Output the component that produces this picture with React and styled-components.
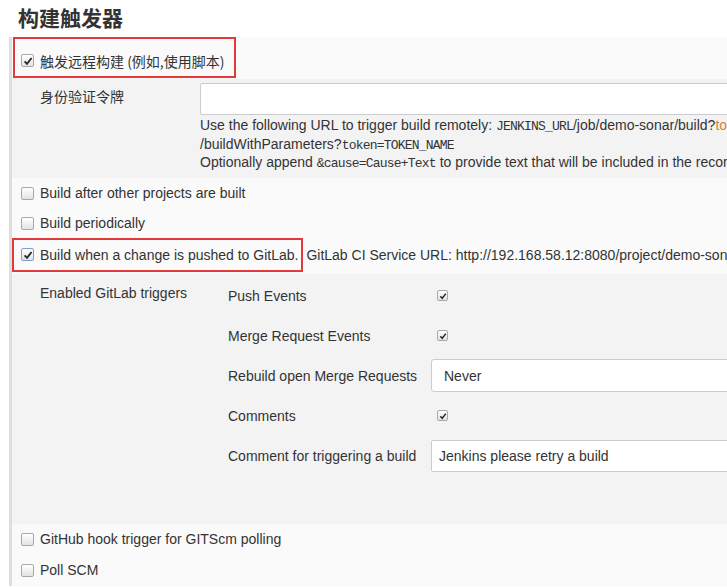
import React from 'react';
import styled, { createGlobalStyle } from 'styled-components';

const GlobalStyle = createGlobalStyle`
  body {
    margin: 0;
    background: #fff;
    color: #333;
    font-family: "Liberation Sans", Arial, "Noto Sans CJK SC", sans-serif;
    font-size: 14px;
  }
`;

const Page = styled.div`
  width: 727px;
  height: 587px;
  overflow: hidden;
  background: #fff;
`;

const Title = styled.h2`
  margin: 0;
  height: 37px;
  padding-left: 18px;
  font-family: "Noto Sans CJK SC", sans-serif;
  font-size: 21px;
  font-weight: 700;
  line-height: 34px;
  color: #333;
`;

const Section = styled.div`
  margin-left: 9px;
  border-left: 3px solid #dedede;
  background: #fafafa;
`;

const OptionRow = styled.div`
  display: flex;
  align-items: ${(p) => (p.$top ? 'flex-start' : 'center')};
  height: ${(p) => p.$h || 31}px;
  padding-left: ${(p) => p.$pad ?? 9}px;
  white-space: nowrap;
`;

const Highlight = styled.div`
  display: flex;
  align-items: center;
  height: ${(p) => p.$h}px;
  box-sizing: border-box;
  margin-left: ${(p) => p.$ml || 0}px;
  padding: ${(p) => p.$pt || 0}px ${(p) => p.$pr}px 0 ${(p) => p.$pl}px;
  border: 2px solid #e2393b;
`;

const Box = styled.span`
  display: inline-flex;
  align-items: center;
  justify-content: center;
  flex: none;
  width: ${(p) => p.$size}px;
  height: ${(p) => p.$size}px;
  box-sizing: border-box;
  border: 1px solid ${(p) => (p.$focus ? '#7d9fd3' : '#a8a8a8')};
  border-radius: 2px;
  background: linear-gradient(#ffffff, #e3e3e3);
`;

const Checkbox = ({ checked, focus, size = 13 }) => (
  <Box $size={size} $focus={focus}>
    {checked && (
      <svg width={size - 3} height={size - 3} viewBox="0 0 10 10">
        <path d="M1.6 5.4 L4 7.8 L8.6 2" fill="none" stroke="#2b2b2b" strokeWidth="1.9" />
      </svg>
    )}
  </Box>
);

const OptionLabel = styled.span`
  margin-left: 6px;
  line-height: 18px;
  font-family: ${(p) => (p.$cjk ? '"Noto Sans CJK SC", sans-serif' : 'inherit')};
`;

const Trailing = styled.span`
  margin-left: 3px;
  line-height: 34px;
`;

const Nested = styled.div`
  display: flex;
  background: #f3f3f3;
  padding: 4px 0 6px 28px;
`;

const FieldLabel = styled.div`
  width: 160px;
  flex: none;
  font-family: "Noto Sans CJK SC", sans-serif;
  line-height: 20px;
  padding-top: 3px;
`;

const FieldBody = styled.div`
  flex: 1;
  min-width: 0;
`;

const TextInput = styled.div`
  width: 600px;
  height: ${(p) => p.$h || 32}px;
  box-sizing: border-box;
  border: 1px solid #cccccc;
  border-radius: 2px;
  background: #fff;
  display: flex;
  align-items: center;
  padding-left: ${(p) => p.$pl || 7}px;
  white-space: nowrap;
`;

const Help = styled.div`
  padding-top: 1px;
  white-space: nowrap;
`;

const HelpLine = styled.div`
  height: 18.5px;
  line-height: 18.5px;
`;

const Code = styled.code`
  font-family: "Liberation Mono", "Courier New", monospace;
  font-size: 13px;
  line-height: 1;
  letter-spacing: -0.8px;
`;

const Orange = styled.span`
  color: #d9822b;
`;

const GitLabBlock = styled.div`
  display: flex;
  background: #f3f3f3;
  padding: 2px 0 48px 28px;
`;

const BlockLabel = styled.div`
  width: 188px;
  flex: none;
  padding-top: 8px;
  line-height: 18px;
`;

const TriggerGrid = styled.div`
  display: grid;
  grid-template-columns: 203px 600px;
  grid-auto-rows: 40px;
  align-items: center;
  white-space: nowrap;
`;

const GridCheck = styled.div`
  padding-left: 6px;
  display: flex;
  align-items: center;
`;

const Select = styled(TextInput)`
  height: 33px;
  border-radius: 3px;
`;

const options = [
  'GitHub hook trigger for GITScm polling',
  'Poll SCM',
];

export default function App() {
  return (
    <Page>
      <GlobalStyle />
      <Title>构建触发器</Title>
      <Section>
        <OptionRow $h={42} $pad={0} $top>
          <Highlight $h={41} $ml={1} $pl={6} $pr={9} $pt={6}>
            <Checkbox checked />
            <OptionLabel $cjk>触发远程构建 (例如,使用脚本)</OptionLabel>
          </Highlight>
        </OptionRow>
        <Nested>
          <FieldLabel>身份验证令牌</FieldLabel>
          <FieldBody>
            <TextInput />
            <Help>
              <HelpLine>
                Use the following URL to trigger build remotely: <Code>JENKINS_URL</Code>/job/demo-sonar/build?<Orange>token=TOKEN_NAME</Orange>
              </HelpLine>
              <HelpLine>
                /buildWithParameters?<Code>token=TOKEN_NAME</Code>
              </HelpLine>
              <HelpLine>
                Optionally append <Code>&amp;cause=Cause+Text</Code> to provide text that will be included in the recorded build cause.
              </HelpLine>
            </Help>
          </FieldBody>
        </Nested>
        <OptionRow>
          <Checkbox />
          <OptionLabel>Build after other projects are built</OptionLabel>
        </OptionRow>
        <OptionRow $h={29}>
          <Checkbox />
          <OptionLabel>Build periodically</OptionLabel>
        </OptionRow>
        <OptionRow $h={36} $pad={0} $top>
          <Highlight $h={34} $pl={7} $pr={3}>
            <Checkbox checked focus />
            <OptionLabel>Build when a change is pushed to GitLab.</OptionLabel>
          </Highlight>
          <Trailing>
            GitLab CI Service URL: http://192.168.58.12:8080/project/demo-sonar
          </Trailing>
        </OptionRow>
        <GitLabBlock>
          <BlockLabel>Enabled GitLab triggers</BlockLabel>
          <TriggerGrid>
            <span>Push Events</span>
            <GridCheck><Checkbox checked size={11} /></GridCheck>
            <span>Merge Request Events</span>
            <GridCheck><Checkbox checked size={11} /></GridCheck>
            <span>Rebuild open Merge Requests</span>
            <Select $pl={12}>Never</Select>
            <span>Comments</span>
            <GridCheck><Checkbox checked size={11} /></GridCheck>
            <span>Comment for triggering a build</span>
            <TextInput $pl={7}>Jenkins please retry a build</TextInput>
          </TriggerGrid>
        </GitLabBlock>
        {options.map((o) => (
          <OptionRow key={o}>
            <Checkbox />
            <OptionLabel>{o}</OptionLabel>
          </OptionRow>
        ))}
      </Section>
    </Page>
  );
}
